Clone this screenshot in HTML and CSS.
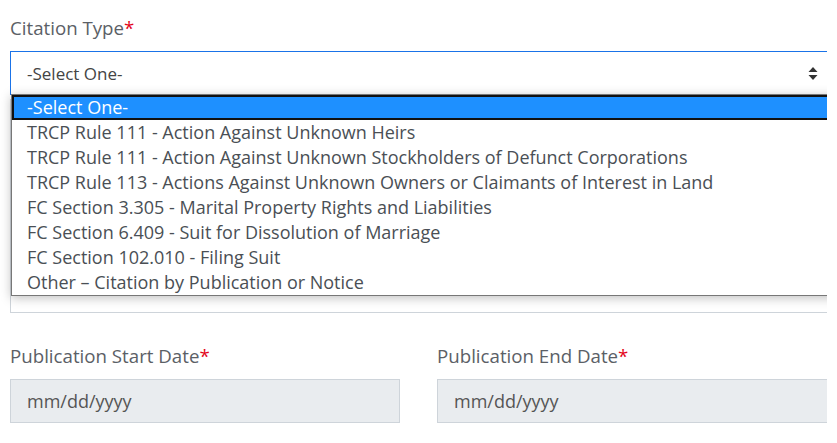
FILE: index.html
```html
<!DOCTYPE html>
<html lang="en">

<head>
    <meta charset="UTF-8">
    <meta name="viewport" content="width=device-width, initial-scale=1.0">
    <title>Citation Request</title>
    <link rel="stylesheet" href="styles.css">
</head>

<body>
    <div class="page">
        <form class="citation-form">
            <!-- Citation Type -->
            <div class="form-group">
                <label class="field-label">Citation Type<span class="req">*</span></label>
                <div class="select-wrap">
                    <div class="select-box">
                        <span>-Select One-</span>
                        <svg class="select-arrows" width="10" height="13" viewBox="0 0 10 13">
                            <path d="M5 0 L9.5 5 L0.5 5 Z" fill="#333"/>
                            <path d="M0.5 8 L9.5 8 L5 13 Z" fill="#333"/>
                        </svg>
                    </div>
                    <ul class="dropdown">
                        <li class="active">-Select One-</li>
                        <li>TRCP Rule 111 - Action Against Unknown Heirs</li>
                        <li>TRCP Rule 111 - Action Against Unknown Stockholders of Defunct Corporations</li>
                        <li>TRCP Rule 113 - Actions Against Unknown Owners or Claimants of Interest in Land</li>
                        <li>FC Section 3.305 - Marital Property Rights and Liabilities</li>
                        <li>FC Section 6.409 - Suit for Dissolution of Marriage</li>
                        <li>FC Section 102.010 - Filing Suit</li>
                        <li>Other – Citation by Publication or Notice</li>
                    </ul>
                </div>
                <div class="text-box"></div>
            </div>

            <!-- Publication Dates -->
            <div class="date-row">
                <div class="form-group">
                    <label class="field-label">Publication Start Date<span class="req">*</span></label>
                    <div class="date-input">mm/dd/yyyy</div>
                </div>
                <div class="form-group">
                    <label class="field-label">Publication End Date<span class="req">*</span></label>
                    <div class="date-input">mm/dd/yyyy</div>
                </div>
            </div>
        </form>
    </div>
</body>

</html>
```

FILE: styles.css
```css
body {
    font-family: "Open Sans", Arial, sans-serif;
    margin: 0;
    padding: 0;
    background-color: #fff;
    color: #555;
}

.page {
    width: 817px;
    padding-left: 10px;
    overflow: hidden;
}

.citation-form {
    width: 830px;
    padding-top: 16px;
}

.field-label {
    display: block;
    font-size: 18.7px;
    line-height: 24px;
    color: #5b6066;
    margin-bottom: 11px;
}

.req {
    color: #e3051b;
}

.select-wrap {
    position: relative;
}

.select-box {
    height: 42px;
    border: 1px solid #1a73e8;
    padding: 0 21px 0 16px;
    display: flex;
    align-items: center;
    justify-content: space-between;
    font-size: 17px;
    color: #444;
}

.select-arrows {
    display: block;
}

.dropdown {
    position: absolute;
    top: 43px;
    left: 1px;
    right: 3px;
    margin: 0;
    padding: 0;
    list-style: none;
    background-color: #fff;
    border: 1px solid #777;
    box-shadow: 0 2px 10px rgba(0, 0, 0, 0.25);
    z-index: 2;
}

.dropdown li {
    height: 25px;
    line-height: 25px;
    padding-left: 15px;
    font-size: 18px;
    color: #4a4f55;
    white-space: nowrap;
}

.dropdown li.active {
    background-color: #1e90ff;
    color: #fff;
    outline: 2px solid #111;
    outline-offset: -2px;
}

.text-box {
    height: 212px;
    margin-top: 4px;
    border: 1px solid #ced4da;
}

.date-row {
    display: grid;
    grid-template-columns: 390px 1fr;
    gap: 37px;
    margin-top: 31px;
}

.date-input {
    height: 42px;
    line-height: 42px;
    border: 1px solid #ced4da;
    background-color: #e9ecef;
    padding-left: 16px;
    font-size: 18px;
    color: #555;
}
```
